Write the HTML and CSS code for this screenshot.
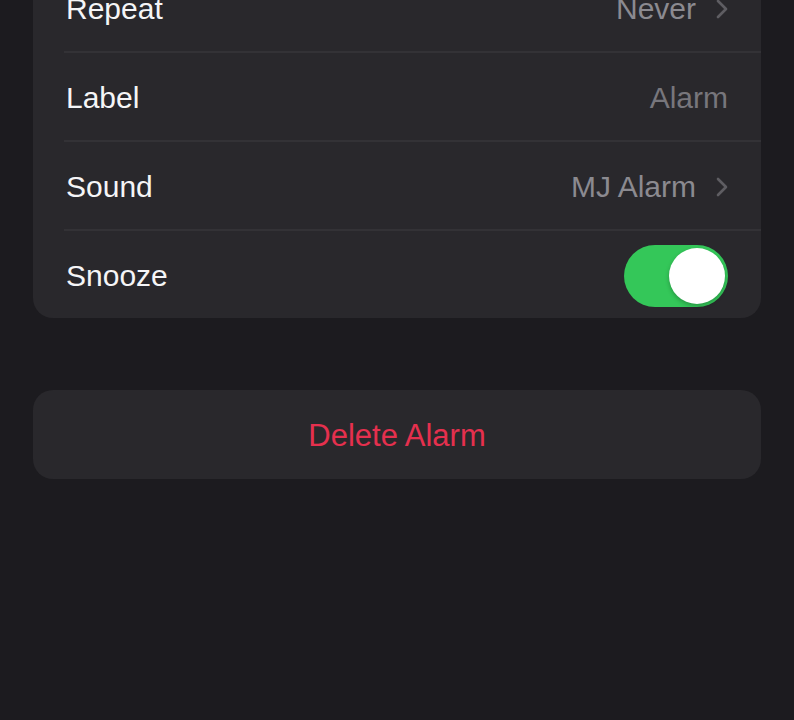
FILE: index.html
```html
<!DOCTYPE html>
<html lang="en">
<head>
    <meta charset="UTF-8">
    <meta name="viewport" content="width=device-width, initial-scale=1.0">
    <title>Edit Alarm</title>
    <link rel="stylesheet" href="styles.css">
</head>
<body>
    <div class="page">
        <div class="group">
            <div class="row">
                <span class="row-title">Repeat</span>
                <span class="row-value">Never
                    <svg class="chevron" viewBox="0 0 12 20" width="12" height="20"><path d="M2 2 L10 10 L2 18" /></svg>
                </span>
            </div>
            <div class="row">
                <span class="row-title">Label</span>
                <span class="row-value placeholder">Alarm</span>
            </div>
            <div class="row">
                <span class="row-title">Sound</span>
                <span class="row-value">MJ Alarm
                    <svg class="chevron" viewBox="0 0 12 20" width="12" height="20"><path d="M2 2 L10 10 L2 18" /></svg>
                </span>
            </div>
            <div class="row">
                <span class="row-title">Snooze</span>
                <div class="toggle on"><div class="knob"></div></div>
            </div>
        </div>

        <div class="group delete-group">
            <div class="delete-btn">Delete Alarm</div>
        </div>
    </div>
</body>
</html>
```

FILE: styles.css
```css
body {
    font-family: "Liberation Sans", Arial, sans-serif;
    background-color: #1c1b1f;
    margin: 0;
    padding: 0;
    overflow: hidden;
}
.page {
    padding: 0 33px;
    margin-top: -36px;
}
.group {
    background-color: #29282c;
    border-radius: 20px;
    overflow: hidden;
}
.row {
    display: flex;
    align-items: center;
    justify-content: space-between;
    height: 89px;
    margin-left: 31px;
    padding-left: 2px;
    padding-right: 33px;
    padding-top: 2px;
    border-bottom: 2px solid #333236;
    box-sizing: border-box;
}
.row:last-child {
    border-bottom: none;
    height: 87px;
}
.row-title {
    color: #f5f5f7;
    font-size: 30px;
}
.row-value {
    display: flex;
    align-items: center;
    color: #8b8a90;
    font-size: 30px;
}
.row-value.placeholder {
    color: #77767c;
}
.chevron {
    margin-left: 20px;
    fill: none;
    stroke: #5e5d62;
    stroke-width: 2.6;
    stroke-linecap: round;
    stroke-linejoin: round;
}
.toggle {
    width: 104px;
    height: 62px;
    border-radius: 31px;
    background-color: #3a3a3e;
    position: relative;
}
.toggle.on {
    background-color: #34c759;
}
.knob {
    position: absolute;
    top: 3px;
    left: 3px;
    width: 56px;
    height: 56px;
    border-radius: 50%;
    background-color: #fff;
    box-shadow: 0 2px 4px rgba(0, 0, 0, 0.25);
}
.toggle.on .knob {
    left: auto;
    right: 3px;
}
.delete-group {
    margin-top: 72px;
}
.delete-btn {
    height: 89px;
    padding-top: 3px;
    box-sizing: border-box;
    display: flex;
    align-items: center;
    justify-content: center;
    color: #e5304e;
    font-size: 31px;
}
```
